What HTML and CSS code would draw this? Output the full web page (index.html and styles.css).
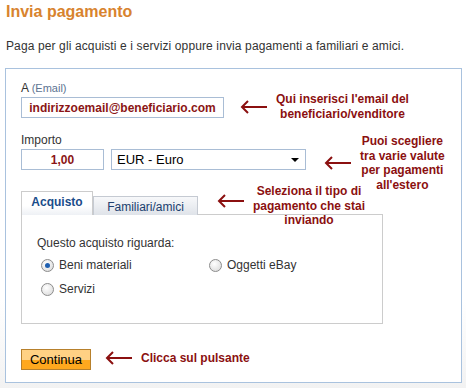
FILE: index.html
```html
<!DOCTYPE html>
<html lang="it">
<head>
    <meta charset="UTF-8">
    <title>Invia pagamento</title>
    <link rel="stylesheet" href="styles.css">
</head>
<body>
    <h1>Invia pagamento</h1>
    <p class="intro">Paga per gli acquisti e i servizi oppure invia pagamenti a familiari e amici.</p>

    <div class="box">
        <label class="field-label">A <span class="hint">(Email)</span></label>
        <input type="text" class="email" value="indirizzoemail@beneficiario.com">

        <label class="field-label amount-label">Importo</label>
        <div class="amount-row">
            <input type="text" class="amount" value="1,00">
            <div class="currency">EUR - Euro <span class="caret"></span></div>
        </div>

        <div class="tabs">
            <div class="tab active">Acquisto</div>
            <div class="tab">Familiari/amici</div>
        </div>
        <div class="panel">
            <p class="question">Questo acquisto riguarda:</p>
            <div class="options">
                <div class="option"><span class="radio checked"></span>Beni materiali</div>
                <div class="option"><span class="radio"></span>Oggetti eBay</div>
                <div class="option"><span class="radio"></span>Servizi</div>
            </div>
        </div>

        <button class="continue">Continua</button>

        <!-- note sovrapposte -->
        <div class="note note-email">
            <svg class="arrow" width="28" height="14" viewBox="0 0 28 14"><path d="M27 7H2M8 1L2 7l6 6" /></svg>
            <span>Qui inserisci l'email del<br>beneficiario/venditore</span>
        </div>
        <div class="note note-currency">
            <svg class="arrow" width="28" height="14" viewBox="0 0 28 14"><path d="M27 7H2M8 1L2 7l6 6" /></svg>
            <span>Puoi scegliere<br>tra varie valute<br>per pagamenti<br>all'estero</span>
        </div>
        <div class="note note-tabs">
            <svg class="arrow" width="28" height="14" viewBox="0 0 28 14"><path d="M27 7H2M8 1L2 7l6 6" /></svg>
            <span>Seleziona il tipo di<br>pagamento che stai<br>inviando</span>
        </div>
        <div class="note note-button">
            <svg class="arrow" width="28" height="14" viewBox="0 0 28 14"><path d="M27 7H2M8 1L2 7l6 6" /></svg>
            <span>Clicca sul pulsante</span>
        </div>
    </div>
</body>
</html>
```

FILE: styles.css
```css
/* General */
body {
    margin: 0;
    padding: 0 5px;
    font-family: "Liberation Sans", Arial, sans-serif;
    color: #333;
    background: linear-gradient(to bottom, #fff 300px, #f2f2f2 388px);
    height: 388px;
    box-sizing: border-box;
}

h1 {
    margin: 0;
    padding: 2px 0 0 1px;
    font-size: 16px;
    line-height: 20px;
    color: #d8832e;
}

.intro {
    margin: 17px 0 14px 1px;
    font-size: 12px;
    line-height: 15px;
    letter-spacing: 0.12px;
}

/* Main box */
.box {
    position: relative;
    width: 457px;
    border: 1px solid #a9c2de;
    background: #fff;
    padding: 12px 15px 12px;
    box-sizing: border-box;
}

.field-label {
    display: block;
    font-size: 12px;
    line-height: 14px;
    color: #333;
    margin-bottom: 2px;
}

.hint {
    font-size: 11px;
    color: #5d7392;
}

.amount-label {
    margin-top: 15px;
}

input[type="text"] {
    display: block;
    height: 21px;
    border: 1px solid #a9bdd5;
    box-sizing: border-box;
    font-family: inherit;
    font-weight: bold;
    font-size: 12px;
    color: #8b1515;
    text-align: center;
    padding: 0;
    margin: 0;
}

.email {
    width: 203px;
}

.amount-row {
    display: flex;
    gap: 7px;
}

.amount {
    width: 83px;
}

.currency {
    position: relative;
    width: 195px;
    height: 21px;
    border: 1px solid #a9bdd5;
    box-sizing: border-box;
    font-size: 13px;
    line-height: 19px;
    padding-left: 5px;
    color: #000;
}

.caret {
    position: absolute;
    right: 6px;
    top: 8px;
    border-left: 4px solid transparent;
    border-right: 4px solid transparent;
    border-top: 4px solid #000;
}

/* Tabs */
.tabs {
    display: flex;
    align-items: flex-end;
    margin-top: 21px;
    height: 24px;
}

.tab {
    height: 19px;
    width: 105px;
    border: 1px solid #c5cad2;
    border-bottom: none;
    background: linear-gradient(to bottom, #f7f8fa, #dfe3e9);
    font-size: 12px;
    line-height: 20px;
    color: #20406e;
    text-align: center;
    box-sizing: border-box;
}

.tab.active {
    height: 24px;
    width: 72px;
    background: linear-gradient(to bottom, #fff 60%, #eef1f5);
    font-weight: bold;
    color: #1a4c8a;
    line-height: 20px;
    border-color: #ccc;
    position: relative;
    z-index: 1;
}

.panel {
    width: 362px;
    height: 110px;
    margin-top: -1px;
    border: 1px solid #ccc;
    box-sizing: border-box;
    padding: 21px 0 0 15px;
}

.question {
    margin: 0;
    font-size: 12px;
    line-height: 14px;
}

.options {
    display: grid;
    grid-template-columns: 168px auto;
    row-gap: 10px;
    margin-top: 8px;
    padding-left: 4px;
}

.option {
    display: flex;
    align-items: center;
    font-size: 12px;
    line-height: 14px;
}

.radio {
    width: 11px;
    height: 11px;
    border-radius: 50%;
    border: 1px solid #8c8c8c;
    background: radial-gradient(circle at 40% 35%, #fff, #d6d6d6);
    margin-right: 5px;
    position: relative;
}

.radio.checked::after {
    content: "";
    position: absolute;
    left: 3px;
    top: 3px;
    width: 5px;
    height: 5px;
    border-radius: 50%;
    background: #1f5fb0;
}

/* Button */
.continue {
    display: block;
    margin-top: 25px;
    width: 70px;
    height: 21px;
    padding: 0;
    border: 1px solid #b7802c;
    background: linear-gradient(to bottom, #ffd184 50%, #ffa81e 50%);
    font-family: inherit;
    font-size: 13px;
    color: #000;
}

/* Annotations */
.note {
    position: absolute;
    display: flex;
    align-items: center;
    gap: 8px;
    font-size: 12px;
    font-weight: bold;
    line-height: 14.5px;
    color: #8b1010;
    text-align: center;
}

.arrow path {
    fill: none;
    stroke: #8b1010;
    stroke-width: 2;
}

.note-email {
    left: 234px;
    top: 23px;
}

.note-currency {
    left: 318px;
    top: 65px;
}

.note-tabs {
    left: 211px;
    top: 115px;
    align-items: flex-start;
}

.note-tabs .arrow {
    margin-top: 10px;
}

.note-tabs span {
    margin-left: 0;
}

.note-button {
    left: 99px;
    top: 282px;
}
```
